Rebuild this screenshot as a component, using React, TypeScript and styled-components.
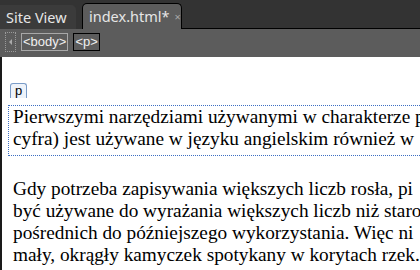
import React from "react";
import styled, { createGlobalStyle } from "styled-components";

const Global = createGlobalStyle`
    html, body {
        margin: 0;
        padding: 0;
        width: 420px;
        height: 270px;
        overflow: hidden;
        background: #ffffff;
    }
`;

const Frame = styled.div`
    width: 420px;
    height: 270px;
    display: flex;
    flex-direction: column;
    overflow: hidden;
    font-family: "Noto Sans", "Open Sans", sans-serif;
`;

const TabBar = styled.div`
    height: 29px;
    background: #333333;
    display: flex;
    align-items: flex-end;
    flex-shrink: 0;
`;

const Tab = styled.div<{ $active?: boolean }>`
    box-sizing: border-box;
    height: ${(p) => (p.$active ? "26px" : "24px")};
    width: ${(p) => (p.$active ? "100px" : "76px")};
    padding: 0 0 1px 6px;
    margin-left: ${(p) => (p.$active ? "6px" : "0")};
    display: flex;
    align-items: center;
    gap: 5px;
    color: #e6e6e6;
    font-size: 14.5px;
    background: ${(p) => (p.$active ? "#5c5c5c" : "#3b3b3b")};
    border: ${(p) => (p.$active ? "1px solid #000" : "none")};
    border-bottom: none;
    border-radius: ${(p) => (p.$active ? "5px 5px 0 0" : "0 5px 0 0")};
    white-space: nowrap;
`;

const Close = styled.span`
    font-size: 11px;
    color: #a8a8a8;
`;

const Filler = styled.div`
    flex: 1;
    height: 1px;
    background: #000;
`;

const Crumbs = styled.div`
    height: 28px;
    background: #5c5c5c;
    display: flex;
    align-items: center;
    gap: 5px;
    padding: 0 0 3px 5px;
    box-sizing: border-box;
    flex-shrink: 0;
`;

const Arrow = styled.div`
    width: 9px;
    height: 18px;
    border: 1px dotted #9a9a9a;
    display: flex;
    align-items: center;
    justify-content: center;
    &::before {
        content: "";
        border-right: 3px solid #aaa;
        border-top: 3px solid transparent;
        border-bottom: 3px solid transparent;
    }
`;

const Crumb = styled.div<{ $current?: boolean }>`
    height: 16px;
    padding: 0 1px;
    display: flex;
    align-items: center;
    font-family: "Liberation Sans", Arial, sans-serif;
    font-size: 13px;
    color: #f0f0f0;
    border: 1px solid ${(p) => (p.$current ? "#000" : "#a8a8a8")};
`;

const Page = styled.div`
    flex: 1;
    background: #ffffff;
    border-left: 2px solid #1a1a1a;
    padding: 26px 0 0 6px;
    font-family: "Liberation Serif", "Times New Roman", serif;
    font-size: 19.3px;
    line-height: 22px;
    color: #000;
    white-space: nowrap;
    overflow: hidden;
`;

const TagLabel = styled.div`
    display: inline-block;
    margin-left: 2px;
    height: 14px;
    padding: 0 4px;
    font-family: "Liberation Sans", Arial, sans-serif;
    font-size: 13px;
    line-height: 14px;
    color: #000;
    background: #eef3fa;
    border: 1px solid #7a9cc8;
    border-bottom: none;
    border-radius: 3px 3px 0 0;
    vertical-align: top;
`;

const Selected = styled.p`
    margin: 0;
    padding: 0 0 5px 4px;
    border-top: 1px dotted #3d6fc2;
    border-bottom: 1px dotted #3d6fc2;
    border-left: 1px dotted #3d6fc2;
`;

const Para = styled.p`
    margin: 22px 0 0 5px;
`;

export default function App(): JSX.Element {
    return (
        <>
            <Global />
            <Frame>
                <TabBar>
                    <Tab>Site View</Tab>
                    <Tab $active>
                        index.html* <Close>×</Close>
                    </Tab>
                    <Filler />
                </TabBar>
                <Crumbs>
                    <Arrow />
                    <Crumb>&lt;body&gt;</Crumb>
                    <Crumb $current>&lt;p&gt;</Crumb>
                </Crumbs>
                <Page>
                    <TagLabel>p</TagLabel>
                    <Selected>
                        Pierwszymi narzędziami używanymi w charakterze pomocy
                        <br />
                        cyfra) jest używane w języku angielskim również w
                    </Selected>
                    <Para>
                        Gdy potrzeba zapisywania większych liczb rosła, pi
                        <br />
                        być używane do wyrażania większych liczb niż staro
                        <br />
                        pośrednich do późniejszego wykorzystania. Więc ni
                        <br />
                        mały, okrągły kamyczek spotykany w korytach rzek.
                    </Para>
                </Page>
            </Frame>
        </>
    );
}
